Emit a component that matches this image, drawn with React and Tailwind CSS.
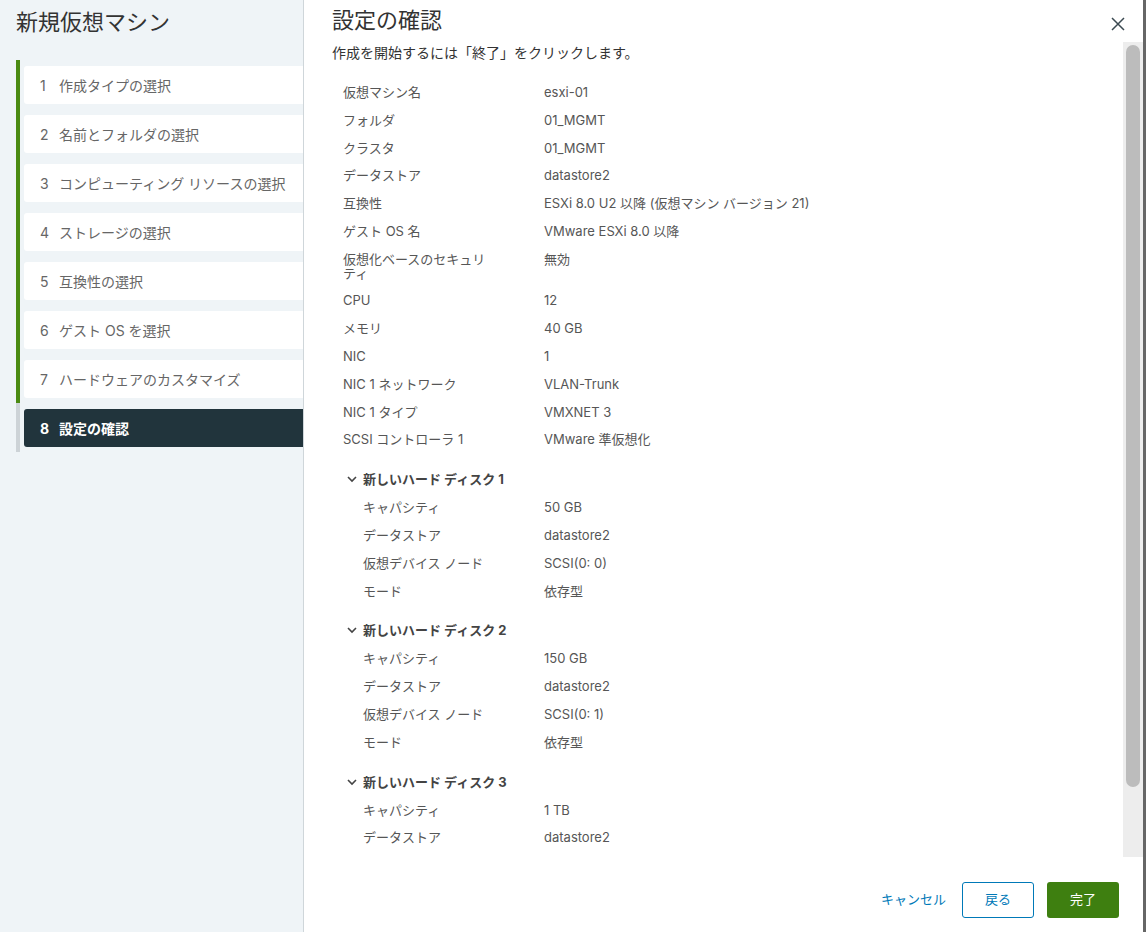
import React from "react";

const font = { fontFamily: 'Inter, "Noto Sans CJK JP", sans-serif' };

const steps = [
  "作成タイプの選択",
  "名前とフォルダの選択",
  "コンピューティング リソースの選択",
  "ストレージの選択",
  "互換性の選択",
  "ゲスト OS を選択",
  "ハードウェアのカスタマイズ",
  "設定の確認",
];

const rows = [
  ["仮想マシン名", "esxi-01"],
  ["フォルダ", "01_MGMT"],
  ["クラスタ", "01_MGMT"],
  ["データストア", "datastore2"],
  ["互換性", "ESXi 8.0 U2 以降 (仮想マシン バージョン 21)"],
  ["ゲスト OS 名", "VMware ESXi 8.0 以降"],
  ["仮想化ベースのセキュリティ", "無効"],
  ["CPU", "12"],
  ["メモリ", "40 GB"],
  ["NIC", "1"],
  ["NIC 1 ネットワーク", "VLAN-Trunk"],
  ["NIC 1 タイプ", "VMXNET 3"],
  ["SCSI コントローラ 1", "VMware 準仮想化"],
];

const disks = [
  {
    title: "新しいハード ディスク 1",
    rows: [
      ["キャパシティ", "50 GB"],
      ["データストア", "datastore2"],
      ["仮想デバイス ノード", "SCSI(0: 0)"],
      ["モード", "依存型"],
    ],
  },
  {
    title: "新しいハード ディスク 2",
    rows: [
      ["キャパシティ", "150 GB"],
      ["データストア", "datastore2"],
      ["仮想デバイス ノード", "SCSI(0: 1)"],
      ["モード", "依存型"],
    ],
  },
  {
    title: "新しいハード ディスク 3",
    rows: [
      ["キャパシティ", "1 TB"],
      ["データストア", "datastore2"],
      ["仮想デバイス ノード", "SCSI(0: 2)"],
      ["モード", "依存型"],
    ],
  },
];

function Row({ label, value, sub }) {
  return (
    <div
      className={
        "grid py-[7px] text-[13px] leading-[13.8px] text-[#565656] " +
        (sub ? "grid-cols-[181px_1fr]" : "grid-cols-[201px_1fr]")
      }
    >
      <div className="max-w-[152px]">{label}</div>
      <div>{value}</div>
    </div>
  );
}

export default function App() {
  return (
    <div style={font} className="flex h-[932px] w-[1146px] overflow-hidden bg-white">
      {/* left panel */}
      <div className="flex w-[304px] shrink-0 flex-col border-r border-[#cfd6da] bg-[#eff4f7]">
        <div className="pl-[16px] pt-[7px] text-[22px] leading-[30px] text-[#333]">新規仮想マシン</div>
        <div className="ml-[16px] mt-[23px] flex flex-col">
          {steps.map((s, i) => {
            const active = i === 7;
            return (
              <div
                key={i}
                className={
                  "border-l-4 pl-[4px] pt-[6px] pb-[5px] " +
                  (active ? "border-[#cdd3d7]" : "border-[#4a8a12]")
                }
              >
                <div
                  className={
                    "flex h-[38px] items-center rounded-l-[3px] pl-[16px] text-[14px] " +
                    (active ? "bg-[#21343c] font-bold text-white" : "bg-white text-[#666]")
                  }
                >
                  <span className="w-[19px]">{i + 1}</span>
                  <span>{s}</span>
                </div>
              </div>
            );
          })}
        </div>
      </div>

      {/* right panel */}
      <div className="flex min-w-0 flex-1 flex-col">
        <div className="flex h-[42px] shrink-0 items-start justify-between pl-[28px] pr-[18px] pt-[5px]">
          <div className="text-[22px] leading-[30px] text-[#333]">設定の確認</div>
          <svg width="14" height="14" viewBox="0 0 14 14" className="mt-[12px]">
            <path d="M1 1 L13 13 M13 1 L1 13" stroke="#3c4a52" strokeWidth="1.5" fill="none" />
          </svg>
        </div>
        <div className="flex min-h-0 flex-1">
          <div className="min-w-0 flex-1 overflow-hidden pl-[28px]">
            <div className="pt-[1px] text-[14px] leading-[20px] text-[#333]">
              作成を開始するには「終了」をクリックします。
            </div>
            <div className="mt-[16px] pl-[11px]">
              {rows.map(([l, v], i) => (
                <Row key={i} label={l} value={v} />
              ))}
              {disks.map((d, di) => (
                <div key={di} className="mt-[10px]">
                  <div className="flex items-center py-[8px] text-[13px] font-bold leading-[14px] text-[#444]">
                    <svg width="12" height="12" viewBox="0 0 12 12" className="ml-[3px] mr-[5px]">
                      <path d="M2 4 L6 8 L10 4" stroke="#444" strokeWidth="1.6" fill="none" />
                    </svg>
                    {d.title}
                  </div>
                  <div className="pl-[20px]">
                    {d.rows.map(([l, v], i) => (
                      <Row key={i} label={l} value={v} sub />
                    ))}
                  </div>
                </div>
              ))}
            </div>
          </div>
          <div className="w-[20px] shrink-0 bg-[#ededed] px-[3px] pt-[3px]">
            <div className="h-[742px] rounded-full bg-[#bcbcbc]" />
          </div>
        </div>
        <div className="flex h-[75px] shrink-0 items-start justify-end pr-[24px] pt-[25px]">
          <button className="mr-[16px] h-[36px] text-[13px] text-[#0079b8]">キャンセル</button>
          <button className="mr-[13px] h-[36px] w-[72px] rounded-[3px] border border-[#0079b8] text-[13px] text-[#0079b8]">
            戻る
          </button>
          <button className="h-[36px] w-[72px] rounded-[3px] bg-[#3e7f10] text-[13px] text-white">完了</button>
        </div>
      </div>
      <div className="w-[3px] shrink-0 bg-[#666]" />
    </div>
  );
}
